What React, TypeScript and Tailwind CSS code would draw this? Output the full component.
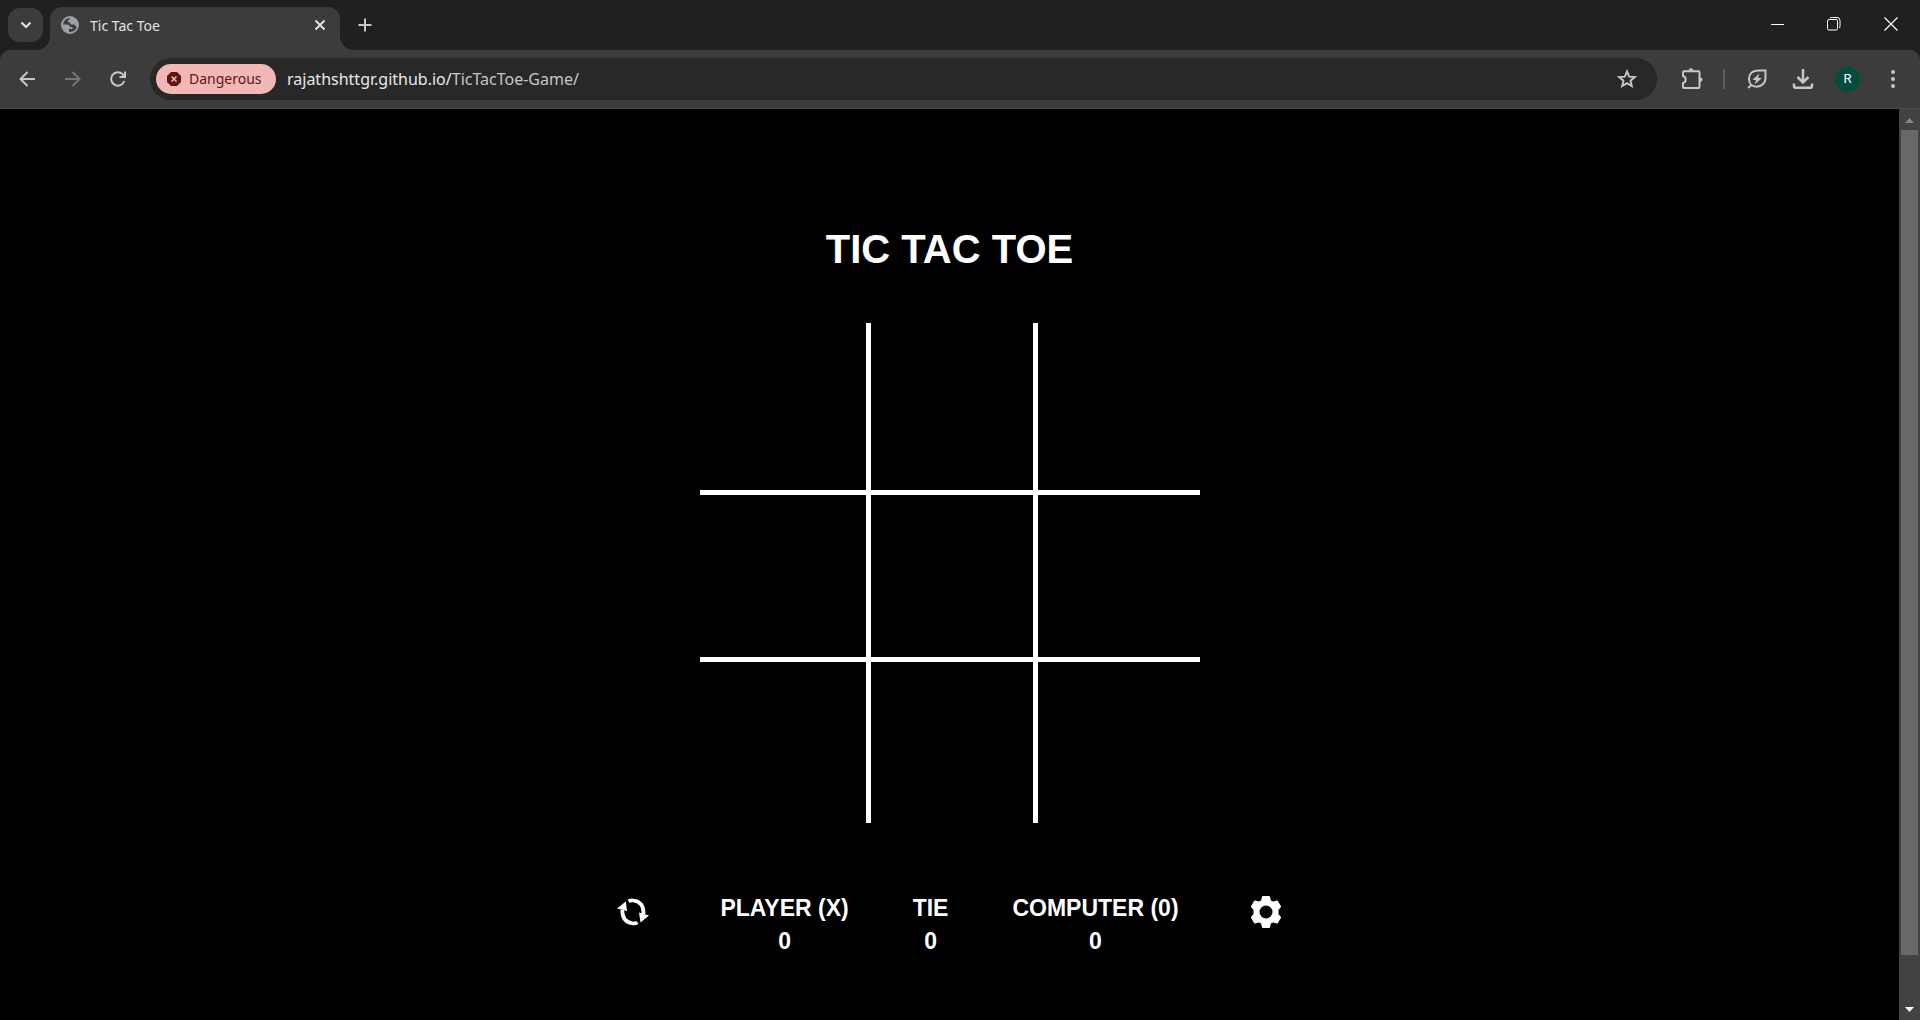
import type { ReactNode } from "react";

function Icon({ size, box = "0 0 24 24", className, children }: { size: string; box?: string; className?: string; children: ReactNode }) {
  return (
    <svg viewBox={box} aria-hidden="true" className={`${size} shrink-0 ${className ?? ""}`} fill="none" stroke="currentColor" strokeWidth="2">
      {children}
    </svg>
  );
}

function TabFoot({ flip = false }: { flip?: boolean }) {
  return (
    <svg viewBox="0 0 14 14" aria-hidden="true" className={flip ? "size-[14px] -scale-x-100" : "size-[14px]"}>
      <path d="M14 0V14H0A14 14 0 0 0 14 0Z" fill="#3c3c3c" />
    </svg>
  );
}

function TitleBar() {
  return (
    <header className="flex h-[50px] shrink-0 items-start bg-[#1f2120] text-[#e3e3e3]">
      <button aria-label="Search tabs" className="mt-2 ml-2 flex h-[34px] w-[35px] items-center justify-center rounded-xl bg-[#3c3c3c]">
        <Icon size="size-[14px]" box="0 0 14 14">
          <path d="M2.500 4.500L7 9L11.500 4.500" />
        </Icon>
      </button>
      <div className="relative mt-[7px] ml-[7px] flex h-[43px] w-[290px] items-center rounded-t-xl bg-[#3c3c3c] pr-3 pb-[7px] pl-[11px]">
        <div className="absolute bottom-0 -left-[14px]"><TabFoot /></div>
        <div className="absolute -right-[14px] bottom-0"><TabFoot flip /></div>
        <svg viewBox="0 0 18 18" aria-hidden="true" className="size-[18px]">
          <circle cx="9" cy="9" r="8" fill="none" stroke="#9aa0a6" strokeWidth="2" />
          <path d="M1 8.500H5.500Q9 8.500 9 11H11.500V13H8V17Q1 16 1 8.500ZM8 1.500H12.500Q16.500 4 17 10Q15 11 14 9.500L13 8.500H9.500V7L7 6V4L9 3.500Z" fill="#9aa0a6" />
        </svg>
        <span className="ml-[11px] flex-1 text-[14px]">Tic Tac Toe</span>
        <button aria-label="Close tab" className="flex size-4 items-center justify-center">
          <Icon size="size-[12px]" box="0 0 12 12">
            <path d="M1.500 1.500L10.500 10.500M10.500 1.500L1.500 10.500" />
          </Icon>
        </button>
      </div>
      <button aria-label="New tab" className="mt-[9px] ml-[9px] flex size-8 items-center justify-center text-[#c7c7c7]">
        <Icon size="size-[14px]" box="0 0 14 14">
          <path d="M7 .5V13.500M.5 7H13.500" />
        </Icon>
      </button>
      <div className="ml-auto flex h-12 items-center text-white">
        <button aria-label="Minimize" className="flex h-12 w-14 items-center justify-center">
          <Icon size="size-[14px]" box="0 0 14 14"><path d="M0 7.500H13" strokeWidth="1" /></Icon>
        </button>
        <button aria-label="Restore" className="flex h-12 w-14 items-center justify-center">
          <Icon size="size-[14px]" box="0 0 14 14">
            <rect x=".5" y="2.500" width="10" height="10.500" rx="1.500" strokeWidth="1" />
            <path d="M3 1Q4 .5 5.500 .5H10Q13 .5 13 3.500V8.500Q13 10 12.500 11" strokeWidth="1" />
          </Icon>
        </button>
        <button aria-label="Close" className="flex h-12 w-[58px] items-center justify-center">
          <Icon size="size-[14px]" box="0 0 14 14"><path d="M.5 .5L13.500 13.500M13.500 .5L.5 13.500" strokeWidth="1.200" /></Icon>
        </button>
      </div>
    </header>
  );
}

function Toolbar() {
  return (
    <div className="shrink-0 bg-[#1f2120]">
      <div className="flex h-[59px] items-center rounded-t-[10px] border-b border-[#4b4b4b] bg-[#3c3c3c] text-[#c7c7c7]">
        <nav className="ml-1 flex w-[146px] shrink-0" aria-label="Page navigation">
          <button aria-label="Back" className="flex h-10 w-[46px] items-center justify-center">
            <Icon size="size-4" box="0 0 16 16"><path d="M16 8H2M8.500 1L1.500 8L8.500 15" /></Icon>
          </button>
          <button aria-label="Forward" disabled className="flex h-10 w-[45px] items-center justify-center text-[#757575]">
            <Icon size="size-4" box="0 0 16 16"><path d="M0 8H14M7.500 1L14.500 8L7.500 15" /></Icon>
          </button>
          <button aria-label="Reload" className="flex h-10 w-[45px] items-center justify-center">
            <Icon size="size-4" box="0 0 16 16"><path d="M14.300 10A6.700 6.700 0 1 1 12.800 3.400L14.500 5.500M15 .5V6H9.500" /></Icon>
          </button>
        </nav>
        <div className="flex h-[42px] min-w-0 flex-1 items-center rounded-full bg-[#282828] pr-5 pl-[6px]">
          <button className="flex h-[30px] w-[120px] shrink-0 items-center gap-2 rounded-full bg-[#f2b8b5] pl-[11px] text-[14px] leading-[18px] text-[#601410]">
            <svg viewBox="0 0 14 14" aria-hidden="true" className="size-[14px]">
              <path d="M4 0H10L14 4V10L10 14H4L0 10V4Z" fill="#601410" />
              <path d="M4.500 4.500L9.500 9.500M9.500 4.500L4.500 9.500" stroke="#f2b8b5" strokeWidth="1.500" />
            </svg>
            Dangerous
          </button>
          <div className="relative ml-[11px] h-full flex-1 text-[16px] leading-[42px]">
            <div aria-hidden="true" className="whitespace-pre text-[#c7c7c7]"><span className="text-[#e8e8e8]">rajathshttgr.github.io/</span>TicTacToe-Game/</div>
            <input aria-label="Address" type="text" className="absolute inset-0 w-full bg-transparent outline-none" />
          </div>
          <button aria-label="Bookmark this page" className="flex size-5 items-center justify-center">
            <Icon size="size-5" box="0 0 20 20">
              <path d="M10 2.500L12.200 7.600L17.700 8.100L13.500 11.700L14.800 17.100L10 14.200L5.200 17.100L6.500 11.700L2.300 8.100L7.800 7.600Z" strokeWidth="1.900" />
            </Icon>
          </button>
        </div>
        <div className="ml-3 flex shrink-0 items-center">
          <button aria-label="Extensions" className="flex h-10 w-[45px] items-center justify-center">
            <Icon size="size-[22px]" box="0 0 22 22">
              <path d="M3 3.200H17.500Q18.500 3.200 18.500 4.200V19Q18.500 20 17.500 20H3Q2 20 2 19V15Q4.700 14.500 4.700 11.600T2 8V4.200Q2 3.200 3 3.200Z" strokeLinejoin="round" />
              <path d="M7.500 2.500Q8 .3 10 .3T12.500 2.500ZM19 9.200Q21.500 9.500 21.500 11.600T19 14Z" fill="currentColor" stroke="none" />
            </Icon>
          </button>
          <span className="ml-[9px] h-5 w-[2px] bg-[#5f5f5f]" />
          <button aria-label="Energy saver" className="ml-[9px] flex h-10 w-[46px] items-center justify-center">
            <Icon size="size-5" box="0 0 20 20">
              <path d="M18.500 1.500H11.500C5 1.500 2 5.500 2 10C2 14.500 5 17.700 9.500 17.700C15 17.700 18.500 13.500 18.500 9ZM1.200 19L4.500 15.700" />
              <path d="M12.500 4.500L5.500 10.700L9.200 11.200L7.500 15.500L14.800 9.300L11 8.800Z" fill="currentColor" stroke="none" />
            </Icon>
          </button>
          <button aria-label="Downloads" className="flex h-10 w-[45px] items-center justify-center">
            <Icon size="size-[22px]" box="0 0 22 22"><path d="M11 1V14M5.500 9L11 14.500L16.500 9M2 15.500V18.500Q2 19.700 3 19.700H19Q20 19.700 20 18.500V15.500" strokeWidth="2.500" /></Icon>
          </button>
          <button aria-label="Profile" className="mx-[10px] flex size-[25px] items-center justify-center rounded-full bg-[#004d40] font-['Roboto'] text-[13px] text-white">R</button>
          <button aria-label="Browser menu" className="mr-[5px] flex h-10 w-[45px] items-center justify-center">
            <Icon size="size-[18px]" box="0 0 18 18">
              <g fill="currentColor" stroke="none"><circle cx="9" cy="2" r="2" /><circle cx="9" cy="9" r="2" /><circle cx="9" cy="16" r="2" /></g>
            </Icon>
          </button>
        </div>
      </div>
    </div>
  );
}

const cellBorders = [
  "", "border-l-5", "border-l-5",
  "border-t-5", "border-t-5 border-l-5", "border-t-5 border-l-5",
  "border-t-5", "border-t-5 border-l-5", "border-t-5 border-l-5",
];

function Score({ label, value }: { label: string; value: number }) {
  return (
    <div className="leading-[33px]">
      <p>{label}</p>
      <p>{value}</p>
    </div>
  );
}

function Game() {
  return (
    <main className="flex flex-1 flex-col items-center bg-black pt-[116px] font-['Liberation_Sans',sans-serif] font-bold text-white">
      <h1 className="text-[40px] leading-[48px]">TIC TAC TOE</h1>
      <div className="mt-[50px] grid grid-cols-[166px_167px_167px] grid-rows-[167px_167px_166px]">
        {cellBorders.map((borders, i) => (
          <button key={i} aria-label={`Cell ${i + 1}`} className={`border-white ${borders}`} />
        ))}
      </div>
      <div className="mt-[69px] flex items-start text-center text-[23px]">
        <button aria-label="Restart game" className="mt-1 mr-[71px]">
          <svg viewBox="0 0 32 32" aria-hidden="true" className="size-8">
            <path d="M11.500 5.200Q14 4 16.500 4.500Q27 6 26.500 18M20.500 26.500Q18 28 15 27.200Q5 25.500 5.300 14" fill="none" stroke="white" strokeWidth="3.700" />
            <path d="M0 12.500L8.800 5.500L10 15ZM32 19.500L23.500 26.500L22 16.500Z" fill="white" />
          </svg>
        </button>
        <div className="flex gap-16">
          <Score label="PLAYER (X)" value={0} />
          <Score label="TIE" value={0} />
          <Score label="COMPUTER (0)" value={0} />
        </div>
        <button aria-label="Settings" className="mt-1 ml-[71px]">
          <svg viewBox="0 0 32 32" aria-hidden="true" className="size-8">
            <path d="M13 1H19L20 5L23 6.700L27 5.500L30 10.500L27.500 13.500V18.500L30 21.500L27 26.500L23 25.300L20 27L19 31H13L12 27L9 25.300L5 26.500L2 21.500L4.500 18.500V13.500L2 10.500L5 5.500L9 6.700L12 5Z" fill="white" stroke="white" strokeWidth="2" strokeLinejoin="round" />
            <circle cx="16" cy="16" r="6.500" fill="black" />
          </svg>
        </button>
      </div>
    </main>
  );
}

function ScrollBar() {
  return (
    <aside aria-hidden="true" className="flex w-[21px] shrink-0 flex-col items-center bg-[#424242]">
      <svg viewBox="0 0 21 21" className="size-[21px] shrink-0"><path d="M6 14L10.500 9L15 14Z" fill="#868686" /></svg>
      <div className="w-[17px] flex-[825] bg-[#686868]" />
      <div className="flex-[44]" />
      <svg viewBox="0 0 21 21" className="size-[21px] shrink-0"><path d="M6 8L10.500 13L15 8Z" fill="white" /></svg>
    </aside>
  );
}

export default function App() {
  return (
    <div className="flex min-h-screen flex-col bg-black font-['Noto_Sans','Open_Sans',sans-serif]">
      <TitleBar />
      <Toolbar />
      <div className="flex flex-1">
        <Game />
        <ScrollBar />
      </div>
    </div>
  );
}
